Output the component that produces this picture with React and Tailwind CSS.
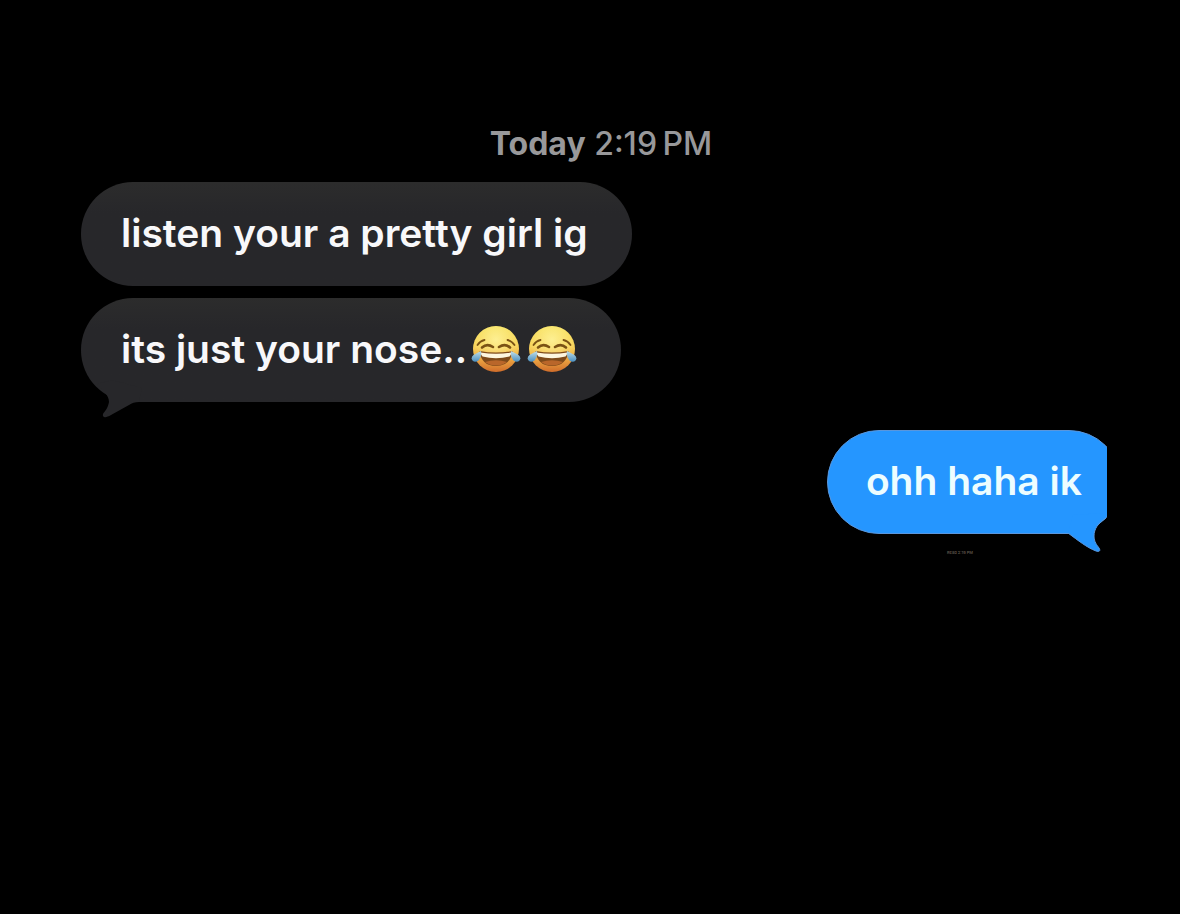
const messages = [
  { id: 1, text: 'listen your a pretty girl ig', emojis: 0, hasTail: false },
  { id: 2, text: 'its just your nose..', emojis: 2, hasTail: true },
];

function JoyEmoji({ id }) {
  return (
    <svg viewBox="0 0 50 50" className="w-[50px] h-[50px] shrink-0" role="img" aria-label="face with tears of joy">
      <defs>
        <linearGradient id={`face-${id}`} x1="0" y1="0" x2="0" y2="1">
          <stop offset="0" stopColor="#f6df58" />
          <stop offset="0.45" stopColor="#f8d25a" />
          <stop offset="0.75" stopColor="#e9a040" />
          <stop offset="1" stopColor="#cf6c2a" />
        </linearGradient>
        <radialGradient id={`shine-${id}`} cx="0.5" cy="0.3" r="0.5">
          <stop offset="0" stopColor="#fff6a0" stopOpacity="0.8" />
          <stop offset="1" stopColor="#fff6a0" stopOpacity="0" />
        </radialGradient>
        <linearGradient id={`tear-${id}`} x1="0" y1="0" x2="0" y2="1">
          <stop offset="0" stopColor="#c3e0e8" />
          <stop offset="1" stopColor="#4a8fc0" />
        </linearGradient>
      </defs>
      <circle cx="25" cy="25" r="23" fill={`url(#face-${id})`} />
      <circle cx="25" cy="25" r="23" fill={`url(#shine-${id})`} />
      {/* Brows and eyes */}
      <g fill="none" stroke="#7a5214" strokeLinecap="round">
        <path d="M6.5 21Q9 17 13.5 16" strokeWidth="1.8" />
        <path d="M43.5 21Q41 17 36.5 16" strokeWidth="1.8" />
        <path d="M11 23.5Q16 19 22 23" strokeWidth="2.6" />
        <path d="M39 23.5Q34 19 28 23" strokeWidth="2.6" />
      </g>
      {/* Mouth */}
      <path d="M8.5 27Q25 30 41.5 27Q39.5 42 25 42Q10.5 42 8.5 27Z" fill="#7d4a1b" />
      <path d="M9.500 28.500Q25 31 40.500 28.500Q40 31 38.500 32.500Q25 36 11.500 32.500Q10 31 9.500 28.500Z" fill="#fdf6df" />
      <path d="M14 38Q25 34.5 36 38Q31 41.5 25 41.5Q19 41.5 14 38Z" fill="#b9662a" />
      {/* Tears */}
      <path d="M10 27Q11 33 7.5 36.5Q4 39 1.5 36.5Q-0.5 33.5 2.5 31Q5 29.5 10 27Z" fill={`url(#tear-${id})`} />
      <path d="M40 27Q39 33 42.5 36.5Q46 39 48.5 36.5Q50.5 33.5 47.5 31Q45 29.5 40 27Z" fill={`url(#tear-${id})`} />
    </svg>
  );
}

function ReceivedBubble({ message }) {
  return (
    <div className="relative flex items-center h-[104px] pl-10 pr-11 pb-0.5 rounded-full bg-linear-to-b from-[#2c2c2c] via-[#27272a] via-30% to-[#27272a] text-[#f8f8fa]">
      <p className="flex items-center whitespace-nowrap">
        {message.text}
        {message.emojis > 0 && (
          <span className="flex gap-[6px] ml-1">
            {Array.from({ length: message.emojis }, (_, i) => (
              <JoyEmoji key={i} id={`${message.id}-${i}`} />
            ))}
          </span>
        )}
      </p>
      {message.hasTail && (
        <svg viewBox="0 0 50 40" className="absolute left-4 top-20 w-[50px] h-[40px]" fill="#27272a" aria-hidden="true">
          <path d="M0 6C6 13 12 17 12 24C11 30 8 33 6 36C5 40 9 40 14 37L32 27Q36 24 42 24L45 10L15 2Z" />
        </svg>
      )}
    </div>
  );
}

export default function App() {
  return (
    <main className="min-h-screen overflow-x-hidden bg-black pt-[124px] pl-[81px] pr-[59px] font-['Inter','Liberation_Sans',sans-serif] text-[39px] leading-[48px] font-semibold">
      {/* Timestamp */}
      <p className="text-center text-[32px] leading-[40px] font-medium text-[#98989a]">
        <span className="font-bold">Today</span> 2:19&#8201;PM
      </p>

      {/* Received */}
      <section className="mt-[18px] flex flex-col items-start gap-3">
        {messages.map((message) => (
          <ReceivedBubble key={message.id} message={message} />
        ))}
      </section>

      {/* Sent, runs off the right side of the thread */}
      <section className="mt-7 mr-[14px] flex flex-col items-end overflow-x-clip">
        <div className="relative -mr-[14px] flex items-center h-[104px] px-[38px] pb-0.5 rounded-full border border-[#5a96dc] bg-[#2596ff] text-[#edfdff]">
          <p className="whitespace-nowrap">ohh haha ik</p>
          <svg viewBox="0 0 50 44" className="absolute right-0.5 top-20 w-[50px] h-[44px]" aria-hidden="true">
            <path d="M38 7C30 12 26 18 26 25C26 31 29 34 31 37C33 40 31 41 28 40C18 36 11 30 0 22L5 4L36 2Z" fill="#2596ff" />
            <path d="M38 7C30 12 26 18 26 25C26 31 29 34 31 37C33 40 31 41 28 40C18 36 11 30 0 22" fill="none" stroke="#5a96dc" />
          </svg>
        </div>
      </section>
      <p className="mt-4 mr-[148px] text-right text-[4px] leading-[6px] text-[#5c5348]">Read 2:19 PM</p>
    </main>
  );
}
